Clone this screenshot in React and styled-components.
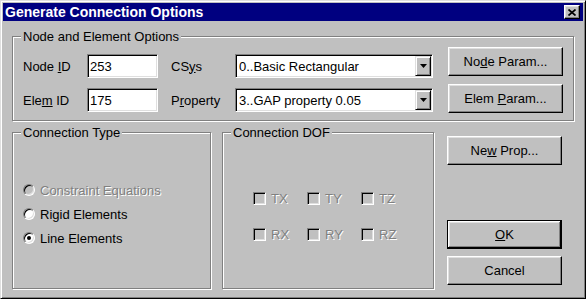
import React from 'react';
import styled, { createGlobalStyle, css } from 'styled-components';

const GlobalStyle = createGlobalStyle`
  body {
    margin: 0;
    background: #c0c0c0;
    font-family: "Liberation Sans", Arial, sans-serif;
  }
`;

const sunken = css`
  border: 1px solid;
  border-color: #808080 #fff #fff #808080;
  box-shadow: inset 1px 1px #000, inset -1px -1px #dfdfdf;
`;

const raised = css`
  border: 1px solid;
  border-color: #fff #000 #000 #fff;
  box-shadow: inset -1px -1px #808080, inset 1px 1px #dfdfdf;
`;

const Window = styled.div`
  width: 586px;
  height: 299px;
  box-sizing: border-box;
  background: #c0c0c0;
  border: 1px solid;
  border-color: #dfdfdf #000 #000 #dfdfdf;
  box-shadow: inset 1px 1px #fff, inset -1px -1px #808080;
  padding: 2px;
  display: flex;
  flex-direction: column;
  font-size: 13px;
  color: #000;
`;

const TitleBar = styled.div`
  height: 18px;
  flex: none;
  background: #000080;
  color: #fff;
  display: flex;
  align-items: center;
  justify-content: space-between;
  padding: 0 3px 0 2px;
  font-weight: bold;
  font-size: 14px;
`;

const CloseBtn = styled.div`
  width: 16px;
  height: 14px;
  box-sizing: border-box;
  background: #c0c0c0;
  ${raised}
  display: flex;
  align-items: center;
  justify-content: center;
`;

const Body = styled.div`
  flex: 1;
  padding: 15px 9px 0 9px;
  display: flex;
  flex-direction: column;
  gap: 11px;
`;

const Group = styled.div`
  position: relative;
  box-sizing: border-box;
  border: 1px solid #808080;
  box-shadow: inset 1px 1px #fff, 1px 1px #fff;
  width: ${p => p.$w || 'auto'};
  height: ${p => p.$h};
  margin-left: ${p => p.$ml || '0'};
  flex: none;
`;

const Legend = styled.span`
  position: absolute;
  top: -8px;
  left: 8px;
  padding: 0 2px;
  line-height: 15px;
  background: #c0c0c0;
`;

const TopContent = styled.div`
  display: flex;
  padding: 10px 10px 0 10px;
`;

const FieldGrid = styled.div`
  display: grid;
  grid-template-columns: 64px 84px 64px 198px;
  grid-auto-rows: 24px;
  row-gap: 10px;
  align-items: center;
  margin-top: 7px;
`;

const ButtonCol = styled.div`
  margin-left: auto;
  display: flex;
  flex-direction: column;
  gap: 8px;
`;

const Button = styled.button`
  width: 115px;
  height: 29px;
  box-sizing: border-box;
  background: #c0c0c0;
  ${raised}
  font-family: inherit;
  font-size: 13px;
  color: #000;
  padding: 0;
  ${p => p.$default && css`
    border: 1px solid #000;
    box-shadow: inset -1px -1px #000, inset 1px 1px #fff, inset -2px -2px #808080, inset 2px 2px #dfdfdf;
  `}
`;

const Key = styled.span`
  text-decoration: underline;
`;

const TextBox = styled.div`
  width: 71px;
  height: 24px;
  box-sizing: border-box;
  ${sunken}
  background: #fff;
  padding-left: 2px;
  display: flex;
  align-items: center;
`;

const Combo = styled.div`
  width: 198px;
  height: 24px;
  box-sizing: border-box;
  ${sunken}
  background: #fff;
  padding: 1px;
  display: flex;
`;

const ComboText = styled.div`
  flex: 1;
  padding-left: 2px;
  display: flex;
  align-items: center;
`;

const ArrowBtn = styled.div`
  width: 16px;
  box-sizing: border-box;
  background: #c0c0c0;
  border: 1px solid;
  border-color: #dfdfdf #000 #000 #dfdfdf;
  box-shadow: inset 1px 1px #fff, inset -1px -1px #808080;
  display: flex;
  align-items: center;
  justify-content: center;
`;

const BottomRow = styled.div`
  display: flex;
  height: 157px;
`;

const RadioList = styled.div`
  display: flex;
  flex-direction: column;
  padding: 45px 0 0 10px;
`;

const OptionRow = styled.div`
  display: flex;
  align-items: center;
  gap: 5px;
  height: ${p => p.$h || '24px'};
  color: ${p => (p.$disabled ? '#808080' : '#000')};
  text-shadow: ${p => (p.$disabled ? '1px 1px #fff' : 'none')};
`;

const Radio = styled.span`
  position: relative;
  width: 12px;
  height: 12px;
  box-sizing: border-box;
  border-radius: 50%;
  ${sunken}
  background: ${p => (p.$disabled ? '#c0c0c0' : '#fff')};
  ${p => p.$checked && css`
    &::after {
      content: '';
      position: absolute;
      left: 3px;
      top: 3px;
      width: 4px;
      height: 4px;
      border-radius: 50%;
      background: #000;
    }
  `}
`;

const CheckGrid = styled.div`
  display: grid;
  grid-template-columns: repeat(3, 54px);
  grid-auto-rows: 20px;
  row-gap: 16px;
  padding: 55px 0 0 30px;
`;

const CheckBox = styled.span`
  width: 13px;
  height: 13px;
  box-sizing: border-box;
  ${sunken}
  background: #c0c0c0;
`;

const SideCol = styled.div`
  margin-left: 13px;
  width: 115px;
  display: flex;
  flex-direction: column;
  padding: 4px 0 0;
`;

const BottomButtons = styled.div`
  margin-top: auto;
  margin-bottom: 4px;
  display: flex;
  flex-direction: column;
  gap: 7px;
`;

const DownArrow = () => (
  <svg width="7" height="4" viewBox="0 0 7 4">
    <polygon points="0,0 7,0 3.5,4" fill="#000" />
  </svg>
);

const CloseGlyph = () => (
  <svg width="8" height="7" viewBox="0 0 8 7">
    <path d="M0.5 0.5 L7.5 6.5 M7.5 0.5 L0.5 6.5" stroke="#000" strokeWidth="1.7" />
  </svg>
);

const dofs = ['TX', 'TY', 'TZ', 'RX', 'RY', 'RZ'];

export default function App() {
  return (
    <>
      <GlobalStyle />
      <Window>
        <TitleBar>
          <span>Generate Connection Options</span>
          <CloseBtn><CloseGlyph /></CloseBtn>
        </TitleBar>
        <Body>
          <Group $h="85px">
            <Legend>Node and Element Options</Legend>
            <TopContent>
              <FieldGrid>
                <span>Node <Key>I</Key>D</span>
                <TextBox>253</TextBox>
                <span>CS<Key>y</Key>s</span>
                <Combo>
                  <ComboText>0..Basic Rectangular</ComboText>
                  <ArrowBtn><DownArrow /></ArrowBtn>
                </Combo>
                <span>Ele<Key>m</Key> ID</span>
                <TextBox>175</TextBox>
                <span>P<Key>r</Key>operty</span>
                <Combo>
                  <ComboText>3..GAP property 0.05</ComboText>
                  <ArrowBtn><DownArrow /></ArrowBtn>
                </Combo>
              </FieldGrid>
              <ButtonCol>
                <Button>No<Key>d</Key>e Param...</Button>
                <Button>Elem <Key>P</Key>aram...</Button>
              </ButtonCol>
            </TopContent>
          </Group>
          <BottomRow>
            <Group $w="199px" $h="157px">
              <Legend>Connection Type</Legend>
              <RadioList>
                <OptionRow $disabled><Radio $disabled />Constraint Equations</OptionRow>
                <OptionRow><Radio />Rigid Elements</OptionRow>
                <OptionRow><Radio $checked />Line Elements</OptionRow>
              </RadioList>
            </Group>
            <Group $w="212px" $h="157px" $ml="11px">
              <Legend>Connection DOF</Legend>
              <CheckGrid>
                {dofs.map(d => (
                  <OptionRow key={d} $disabled $h="20px">
                    <CheckBox />{d}
                  </OptionRow>
                ))}
              </CheckGrid>
            </Group>
            <SideCol>
              <Button>Ne<Key>w</Key> Prop...</Button>
              <BottomButtons>
                <Button $default><Key>O</Key>K</Button>
                <Button>Cancel</Button>
              </BottomButtons>
            </SideCol>
          </BottomRow>
        </Body>
      </Window>
    </>
  );
}
